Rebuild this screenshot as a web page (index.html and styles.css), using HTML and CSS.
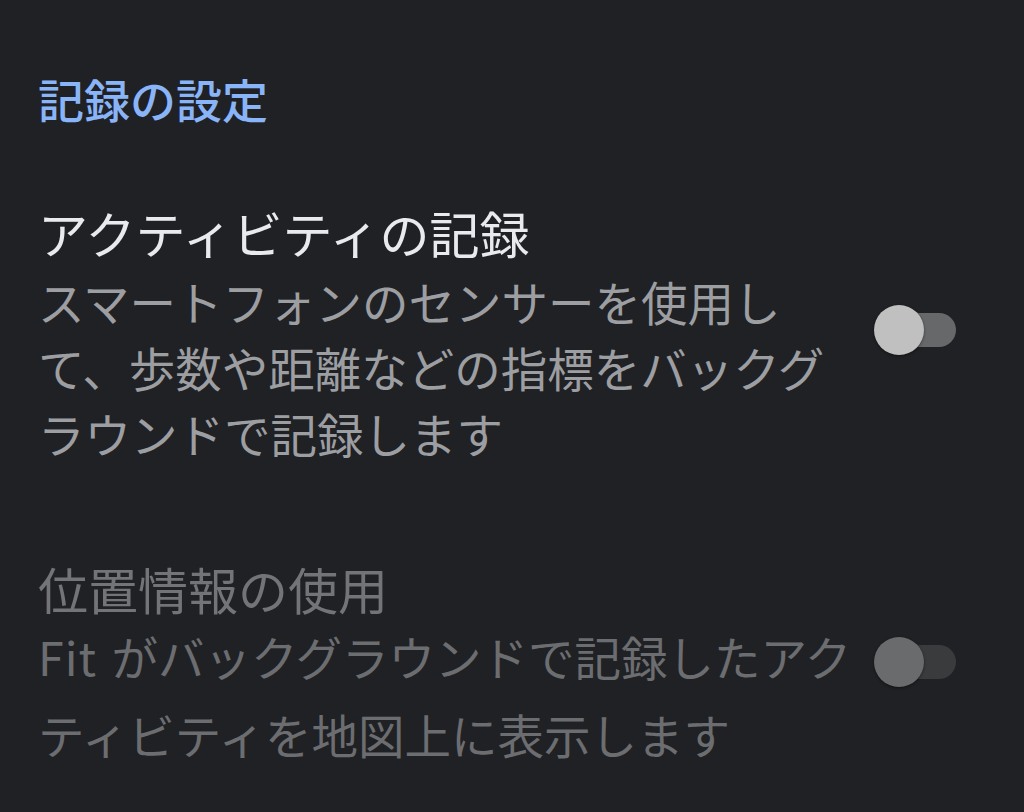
FILE: index.html
```html
<!DOCTYPE html>
<html lang="ja">
<head>
<meta charset="utf-8">
<link rel="stylesheet" href="styles.css">
</head>
<body>
<main class="screen">
  <h2 class="section-title">記録の設定</h2>
  <div class="setting setting-active">
    <div class="setting-text">
      <div class="setting-title">アクティビティの記録</div>
      <div class="setting-desc">スマートフォンのセンサーを使用し<br>て、歩数や距離などの指標をバックグ<br>ラウンドで記録します</div>
    </div>
    <div class="switch switch-on-ish"><span class="track"></span><span class="thumb"></span></div>
  </div>
  <div class="setting setting-disabled">
    <div class="setting-text">
      <div class="setting-title">位置情報の使用</div>
      <div class="setting-desc desc-tall"><span class="latin">Fit</span> がバックグラウンドで記録したアク<br>ティビティを地図上に表示します</div>
    </div>
    <div class="switch switch-disabled"><span class="track"></span><span class="thumb"></span></div>
  </div>
</main>
</body>
</html>
```
FILE: styles.css
```css
html, body {
  margin: 0;
  padding: 0;
  background: #202124;
}
body {
  font-family: "Noto Sans CJK JP", "Noto Sans", sans-serif;
  width: 1024px;
  height: 812px;
  overflow: hidden;
}
.screen {
  padding: 70px 0 0 38px;
  display: flex;
  flex-direction: column;
}
.section-title {
  margin: 0;
  font-size: 46px;
  line-height: 56px;
  font-weight: 500;
  color: #8ab4f8;
}
.setting {
  display: flex;
  align-items: center;
  justify-content: space-between;
  width: 918px;
}
.setting-active {
  margin-top: 76px;
}
.setting-disabled {
  margin-top: 92px;
}
.setting-title {
  font-size: 50px;
  line-height: 60px;
  color: #e8eaed;
  white-space: nowrap;
}
.setting-desc {
  margin-top: 6px;
  font-size: 46.5px;
  line-height: 66px;
  color: #9c9ea2;
  white-space: nowrap;
}
.desc-tall {
  margin-top: -1px;
  line-height: 78px;
}
.latin {
  letter-spacing: 1px;
  margin-right: 4px;
}
.setting-disabled .setting-title {
  color: #737477;
}
.setting-disabled .setting-desc {
  color: #6c6d70;
}
.switch {
  position: relative;
  width: 82px;
  height: 52px;
  flex: none;
  margin-bottom: 8px;
}
.track {
  position: absolute;
  left: 22px;
  top: 9px;
  width: 60px;
  height: 34px;
  border-radius: 17px;
  background: #67686a;
}
.thumb {
  position: absolute;
  left: 0;
  top: 1px;
  width: 50px;
  height: 50px;
  border-radius: 50%;
  background: #c0c0c0;
  box-shadow: 0 1px 3px rgba(0, 0, 0, 0.45);
}
.switch-disabled .track {
  background: #3a3b3d;
}
.switch-disabled .thumb {
  background: #6a6b6d;
}
```
